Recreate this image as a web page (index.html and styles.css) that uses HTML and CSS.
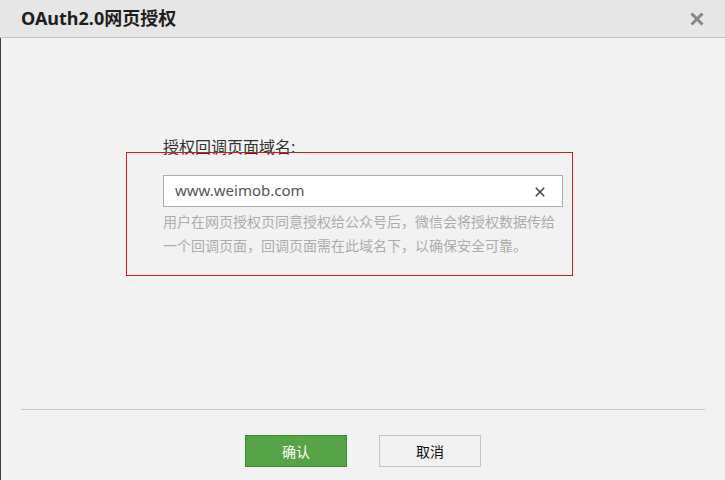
FILE: index.html
```html
<!DOCTYPE html>
<html lang="zh-CN">
<head>
<meta charset="utf-8">
<title>OAuth2.0网页授权</title>
<link rel="stylesheet" href="styles.css">
</head>
<body>
<div class="dialog">
  <div class="header">
    <div class="title">OAuth2.0网页授权</div>
    <svg class="close" width="14" height="14" viewBox="0 0 14 14"><path d="M1.5 1.5 L12.5 12.5 M12.5 1.5 L1.5 12.5" stroke="#878787" stroke-width="3" stroke-linecap="butt"/></svg>
  </div>
  <div class="body">
    <div class="form">
      <div class="label">授权回调页面域名:</div>
      <div class="input">
        <span class="value">www.weimob.com</span>
        <svg class="clear" width="10" height="10" viewBox="0 0 10 10"><path d="M0.8 0.8 L9.2 9.2 M9.2 0.8 L0.8 9.2" stroke="#444" stroke-width="1.6"/></svg>
      </div>
      <p class="help"><span class="help-line">用户在网页授权页同意授权给公众号后，微信会将授权数据传给</span><span class="help-line last">一个回调页面，回调页面需在此域名下，以确保安全可靠。</span></p>
    </div>
    <div class="highlight"></div>
    <div class="spacer"></div>
    <div class="separator"></div>
    <div class="actions">
      <button class="btn btn-primary">确认</button>
      <button class="btn btn-default">取消</button>
    </div>
  </div>
</div>
</body>
</html>
```

FILE: styles.css
```css
* { box-sizing: border-box; }
html, body {
  margin: 0;
  padding: 0;
  width: 725px;
  height: 480px;
  overflow: hidden;
  background: #f2f2f2;
  font-family: "Noto Sans", "Noto Sans CJK SC", sans-serif;
}
.dialog {
  width: 725px;
  height: 480px;
  display: flex;
  flex-direction: column;
}
.header {
  height: 38px;
  flex: none;
  background: #e6e6e6;
  border-bottom: 1px solid #c2c2c2;
  display: flex;
  align-items: center;
  justify-content: space-between;
  padding: 0 21px 0 21px;
}
.title {
  font-size: 18px;
  font-weight: bold;
  color: #1e1e1e;
  line-height: 24px;
  margin-top: -1px;
}
.close { display: block; margin-top: 1px; }
.body {
  flex: 1;
  position: relative;
  border-left: 1px solid #3c3c3c;
  display: flex;
  flex-direction: column;
}
.form {
  padding: 99px 0 0 162px;
}
.label {
  font-size: 16px;
  line-height: 20px;
  color: #333;
  margin-bottom: 18px;
}
.input {
  width: 400px;
  height: 32px;
  background: #fff;
  border: 1px solid #adadad;
  display: flex;
  align-items: center;
  justify-content: space-between;
  padding: 0 17px 0 11px;
}
.value {
  font-size: 15px;
  color: #555;
  margin-top: -2px;
}
.clear { display: block; margin-top: 1px; }
.help {
  width: 391px;
  margin: 2px 0 0 0;
  font-size: 14px;
  line-height: 24px;
  color: #acacac;
  font-family: "Noto Sans CJK SC", sans-serif;
}
.help-line {
  display: block;
  white-space: nowrap;
  text-align: justify;
  text-align-last: justify;
}
.help-line.last {
  text-align: left;
  text-align-last: left;
}
.highlight {
  position: absolute;
  left: 125px;
  top: 114px;
  width: 447px;
  height: 124px;
  border: 1px solid #cc1f1f;
  pointer-events: none;
}
.spacer { flex: 1; }
.separator {
  height: 1px;
  background: #c8c8c8;
  margin: 0 20px;
}
.actions {
  height: 70px;
  padding-top: 25px;
  display: flex;
  justify-content: center;
  gap: 32px;
}
.btn {
  width: 102px;
  height: 32px;
  font-size: 14px;
  font-family: "Noto Sans CJK SC", sans-serif;
  border: 1px solid;
  padding: 0;
  line-height: 30px;
}
.btn-primary {
  background: #56a447;
  border-color: #3f8a30;
  color: #fff;
}
.btn-default {
  background: #f2f2f2;
  border-color: #c4c4c4;
  color: #111;
}
```
